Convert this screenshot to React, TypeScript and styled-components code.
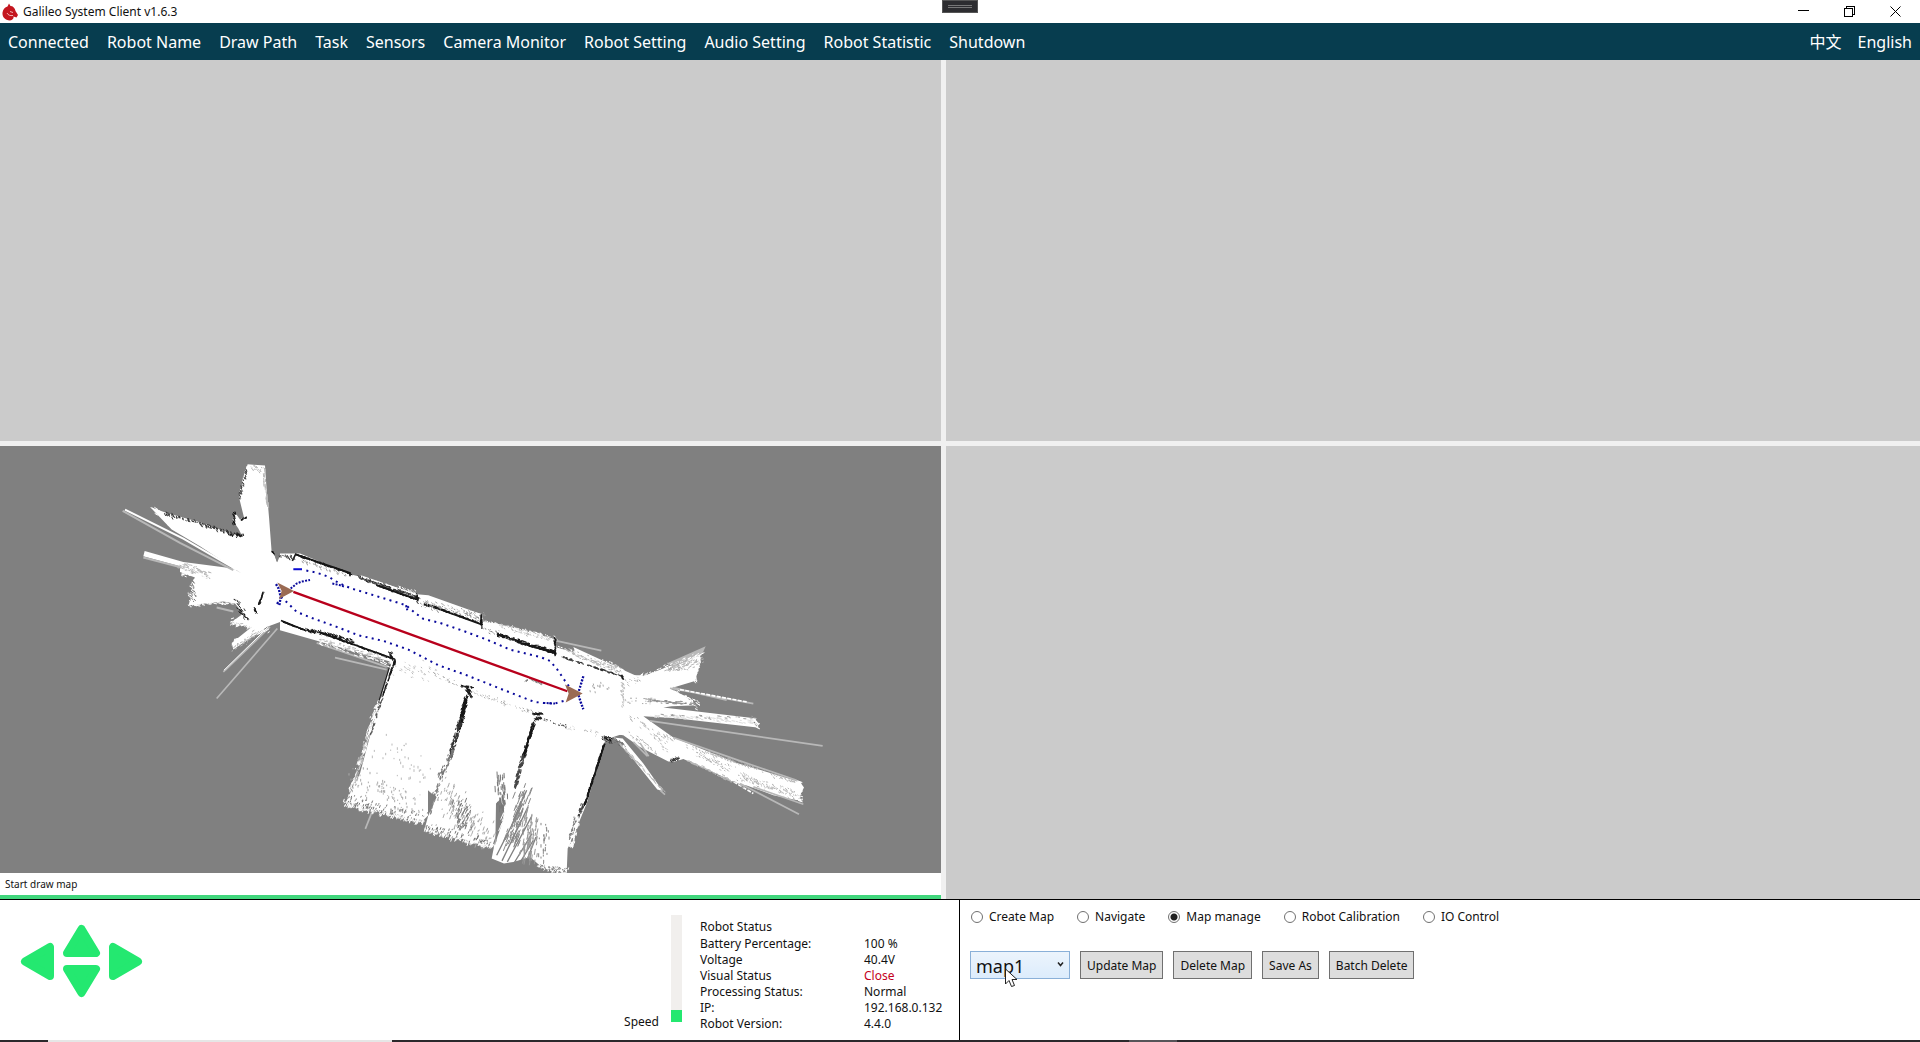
import React, { useState } from "react";
import styled, { createGlobalStyle, css } from "styled-components";

const GlobalStyle = createGlobalStyle`
  *, *::before, *::after { box-sizing: border-box; }
  body {
    margin: 0;
    background: #fff;
    color: #111;
    font: 12px/16px "Noto Sans", "Open Sans", "Noto Sans CJK SC", sans-serif;
  }
  button, select, input { font: inherit; color: inherit; margin: 0; }
`;

const green = "#24e870";

const Window = styled.div`
  display: flex;
  flex-direction: column;
  min-height: 100vh;
`;

const TitleBar = styled.header`
  position: relative;
  display: flex;
  align-items: center;
  height: 23px;
  padding: 0 15px 0 2px;
  gap: 5px;
`;

const Title = styled.h1`
  flex: 1;
  margin: 0;
  font-size: 12px;
  font-weight: 400;
`;

const Grip = styled.div`
  position: absolute;
  top: 0;
  left: 50%;
  width: 36px;
  height: 13px;
  margin-left: -18px;
  padding: 4px 5px;
  background: #2d2d30;
  border: 1px solid #555;

  &::before {
    content: "";
    display: block;
    height: 3px;
    border: solid #777;
    border-width: 1px 0;
  }
`;

const WindowButtons = styled.div`
  display: flex;
  gap: 26px;
`;

const WindowButton = styled.button`
  display: flex;
  width: 20px;
  height: 20px;
  padding: 0;
  align-items: center;
  justify-content: center;
  border: 0;
  background: none;
`;

const MenuBar = styled.nav`
  display: flex;
  justify-content: space-between;
  height: 37px;
  background: #073d4f;
`;

const MenuGroup = styled.div<{ $gap?: number }>`
  display: flex;
  gap: ${(p) => p.$gap ?? 0}px;
`;

const MenuItem = styled.button`
  padding: 0 8px;
  border: 0;
  background: none;
  color: #fff;
  font-size: 16px;
  white-space: nowrap;
`;

const Views = styled.main`
  flex: 1;
  display: grid;
  grid-template: 381fr 454fr / 941fr 974fr;
  gap: 5px;
  background: #f0f0f0;
`;

const View = styled.section`
  background: #cbcbcb;
`;

const MapView = styled.section`
  display: flex;
  flex-direction: column;
  min-width: 0;
  background: #fff;
`;

const MapCanvas = styled.svg`
  display: block;
  flex: 1 1 0;
  min-height: 0;
  width: 100%;
  background: #808080;
`;

const MapMessage = styled.p`
  margin: 0;
  padding: 3px 5px;
  font-size: 10px;
  border-bottom: 4px solid #40d67c;
`;

const Panels = styled.footer`
  display: grid;
  grid-template-columns: 1fr 1fr;
  min-height: 141px;
  border-top: 1px solid #000;
`;

const DrivePanel = styled.section`
  display: flex;
  padding: 15px 0 8px 20px;
  border-right: 1px solid #000;
`;

const Pad = styled.div`
  display: grid;
  grid-template: 33px 33px / 34px 39px 34px;
  align-self: flex-start;
  align-items: center;
  gap: 8px;
  margin: 9px auto 0 0;
`;

type Direction = "up" | "down" | "left" | "right";

const padPlace = {
  up: css`grid-area: 1 / 2;`,
  down: css`grid-area: 2 / 2;`,
  left: css`grid-area: 1 / 1 / 3 / 2;`,
  right: css`grid-area: 1 / 3 / 3 / 4;`,
};

const PadButton = styled.button<{ $dir: Direction }>`
  padding: 0;
  border: 0;
  background: none;
  ${(p) => padPlace[p.$dir]}

  svg {
    display: block;
    fill: ${green};
    stroke: ${green};
    stroke-width: 8px;
    stroke-linejoin: round;
  }
`;

const SpeedLabel = styled.label`
  align-self: flex-end;
  margin-right: 12px;
  margin-bottom: 2px;
`;

const SpeedSlider = styled.input`
  appearance: none;
  writing-mode: vertical-lr;
  direction: rtl;
  width: 11px;
  height: 107px;
  margin-right: 18px;
  background: #f1efed;

  &::-webkit-slider-thumb {
    appearance: none;
    width: 11px;
    height: 12px;
    background: ${green};
  }
`;

const StatusTable = styled.table`
  width: 259px;
  align-self: flex-start;
  margin-top: 4px;
  border-collapse: collapse;
  table-layout: fixed;

  caption {
    height: 17px;
    text-align: left;
  }

  th {
    width: 164px;
    padding: 0;
    font-weight: 400;
    text-align: left;
  }

  td {
    padding: 0;
    white-space: nowrap;
  }
`;

const StatusValue = styled.td<{ $alert?: boolean }>`
  color: ${(p) => (p.$alert ? "#c4001c" : "inherit")};
`;

const TaskPanel = styled.section`
  padding: 9px 10px;
`;

const ModeList = styled.div`
  display: flex;
  gap: 23px;
  padding-left: 1px;
`;

const ModeOption = styled.label`
  display: flex;
  align-items: center;
  gap: 6px;
  white-space: nowrap;
`;

const Radio = styled.input`
  appearance: none;
  width: 12px;
  height: 12px;
  border: 1px solid #707070;
  border-radius: 50%;
  background: #fff;

  &:checked {
    background: radial-gradient(circle, #212121 3px, #fff 4px);
  }
`;

const Actions = styled.div`
  display: flex;
  gap: 10px;
  margin-top: 26px;
`;

const Picker = styled.div`
  position: relative;
  width: 100px;
`;

const MapSelect = styled.select`
  appearance: none;
  display: block;
  width: 100%;
  height: 28px;
  padding: 1px 5px 0;
  border: 1px solid #8ab0d8;
  border-radius: 0;
  background: linear-gradient(#ecf4fc, #dcecfc);
  font-size: 18px;
  line-height: 24px;
`;

const Caret = styled.svg`
  position: absolute;
  top: 11px;
  right: 6px;
  pointer-events: none;
`;

const Pointer = styled.svg`
  position: absolute;
  top: 17px;
  left: 35px;
  pointer-events: none;
`;

const ActionButton = styled.button`
  height: 28px;
  padding: 1px 6px 0;
  border: 1px solid #707070;
  background: #ddd;
  white-space: nowrap;
`;

const Taskbar = styled.div`
  display: flex;
  height: 2px;
  background: #2b292c;
`;

const TaskbarSlot = styled.div<{ $start: number; $width: number; $color: string }>`
  width: ${(p) => p.$width}px;
  margin-left: ${(p) => p.$start}px;
  background: ${(p) => p.$color};
`;

/* ---------- occupancy map ---------- */

function random(seed: number) {
  let s = seed;
  return () => {
    s = (s * 16807) % 2147483647;
    return s / 2147483647;
  };
}

/* Short dashes scattered within `spread` of the segment (x1,y1)-(x2,y2). */
function scatter(
  seed: number,
  [x1, y1, x2, y2]: number[],
  spread: number,
  count: number,
  dx: number,
  dy: number
) {
  const r = random(seed * 7919 + 13);
  let d = "";
  for (let i = 0; i < count; i++) {
    const t = r();
    const nx = (r() + r() - 1) * spread;
    const ny = (r() + r() - 1) * spread;
    const k = 0.4 + r();
    const x = Math.round(x1 + (x2 - x1) * t + nx);
    const y = Math.round(y1 + (y2 - y1) * t + ny);
    d += `M${x} ${y}l${Math.round(dx * k)} ${Math.round(dy * k)}`;
  }
  return d;
}

type Cloud = [number[], number, number, number, number, string];

function Clouds({ items, seed }: { items: Cloud[]; seed: number }) {
  return (
    <g fill="none" strokeWidth="3">
      {items.map(([seg, spread, count, dx, dy, color], i) => (
        <path key={i} d={scatter(seed + i, seg, spread, count, dx, dy)} stroke={color} />
      ))}
    </g>
  );
}

const W = "#fff";
const G = "#808080";
const L = "#b8b8b8";
const K = "#161616";

const westClouds: Cloud[] = [
  [[443, 75, 420, 175], 7, 60, 3, 6, W],
  [[440, 85, 418, 170], 5, 40, 2, 5, "#444"],
  [[450, 80, 490, 85], 10, 25, 3, 4, L],
  [[490, 85, 504, 200], 5, 30, 1, 12, L],
  [[160, 205, 240, 270], 9, 45, 8, 5, W],
  [[195, 218, 390, 275], 6, 90, 3, 6, "#333"],
  [[402, 210, 400, 250], 5, 22, 3, 8, K],
  [[422, 240, 438, 232], 3, 12, 6, -3, K],
  [[390, 280, 425, 284], 7, 26, 2, 6, K],
  [[240, 375, 330, 405], 14, 70, 6, 2, L],
  [[240, 400, 340, 412], 8, 40, 8, 2, W],
  [[285, 415, 268, 492], 14, 90, 5, 4, W],
  [[275, 420, 280, 480], 12, 30, 4, 5, G],
  [[270, 492, 400, 486], 7, 50, 8, 2, W],
  [[405, 475, 440, 540], 12, 34, 5, 6, K],
  [[490, 455, 478, 490], 3, 24, -3, 8, K],
  [[463, 500, 466, 518], 3, 18, 3, 4, K],
  [[395, 545, 450, 560], 12, 60, 8, -3, W],
  [[400, 610, 500, 560], 15, 90, 8, -5, W],
  [[400, 625, 470, 575], 12, 40, 5, -3, L],
  [[545, 345, 580, 352], 9, 20, 3, 6, "#444"],
  [[515, 334, 520, 338], 3, 14, 4, 2, K],
  [[585, 342, 750, 400], 3, 150, 5, 2, K],
  [[600, 360, 740, 405], 7, 40, 4, 3, "#999"],
  [[765, 410, 950, 455], 6, 60, 4, 3, W],
  [[775, 410, 950, 472], 7, 180, 5, 3, "#333"],
  [[830, 435, 950, 478], 3, 90, 6, 2, K],
  [[950, 460, 952, 485], 4, 20, 2, 5, K],
  [[968, 490, 1145, 530], 16, 130, 4, 3, "#999"],
  [[970, 490, 1010, 500], 5, 30, 4, 2, K],
  [[1000, 500, 1145, 550], 3, 90, 5, 2, K],
  [[1145, 520, 1143, 560], 3, 24, 0, 6, K],
  [[1148, 543, 1330, 585], 7, 90, 4, 3, W],
  [[1150, 565, 1200, 580], 8, 18, 4, 2, "#888"],
  [[545, 543, 615, 570], 2, 60, 5, 2, K],
  [[620, 568, 650, 572], 6, 34, 3, 6, K],
  [[655, 575, 760, 602], 8, 90, 5, 3, K],
  [[655, 575, 875, 655], 3, 110, 6, 2, K],
  [[655, 600, 870, 670], 13, 90, 8, 3, W],
  [[660, 600, 850, 655], 8, 70, 5, 1, L],
  [[870, 635, 875, 655], 6, 24, 3, 5, K],
  [[885, 660, 850, 760], 3, 60, -2, 8, K],
  [[850, 760, 808, 890], 5, 60, -2, 8, "#555"],
];

const southClouds: Cloud[] = [
  [[240, 470, 150, 760], 9, 150, -3, 9, W],
  [[205, 580, 160, 740], 8, 40, -2, 7, L],
  [[138, 785, 370, 838], 13, 280, -3, 8, W],
  [[140, 775, 370, 828], 20, 70, -2, 6, "#777"],
  [[180, 700, 350, 800], 55, 90, 0, 6, "#aaa"],
  [[250, 600, 370, 720], 60, 36, 0, 6, "#bbb"],
  [[285, 380, 400, 400], 35, 40, 3, 4, "#bbb"],
  [[400, 400, 480, 435], 10, 22, 3, 3, "#999"],
  [[482, 438, 518, 442], 3, 36, 4, 0, K],
  [[500, 445, 512, 465], 7, 44, 3, 5, K],
  [[500, 470, 480, 560], 8, 190, -2, 6, K],
  [[482, 540, 450, 650], 8, 130, -2, 6, "#333"],
  [[458, 630, 420, 710], 9, 65, -2, 7, "#777"],
  [[415, 730, 385, 820], 10, 45, -3, 9, G],
  [[425, 740, 560, 900], 55, 150, -3, 9, "#aaa"],
  [[480, 780, 500, 860], 30, 50, -4, 10, "#777"],
  [[378, 862, 578, 915], 11, 230, -3, 8, W],
  [[380, 855, 575, 905], 12, 50, -2, 6, "#777"],
  [[520, 455, 690, 515], 10, 55, 3, 2, "#aaa"],
  [[698, 520, 725, 520], 4, 50, 4, 2, K],
  [[703, 535, 725, 530], 5, 32, 3, 4, K],
  [[730, 538, 800, 560], 5, 24, 3, 1, "#444"],
  [[800, 560, 900, 580], 10, 22, 3, 1, "#bbb"],
  [[703, 545, 670, 650], 5, 180, -2, 7, K],
  [[672, 640, 645, 740], 7, 90, -2, 8, "#444"],
  [[600, 700, 610, 820], 20, 50, 1, 16, "#777"],
  [[640, 750, 620, 840], 20, 34, -8, 18, W],
  [[680, 740, 640, 900], 32, 90, -7, 18, "#888"],
  [[690, 800, 690, 950], 35, 70, -3, 18, "#999"],
  [[735, 850, 725, 980], 16, 30, 0, 10, "#888"],
  [[720, 975, 800, 990], 12, 110, -2, 6, W],
  [[720, 978, 798, 988], 10, 34, 3, 5, "#777"],
  [[913, 610, 855, 790], 3, 160, -2, 7, K],
  [[850, 790, 825, 860], 6, 50, -2, 7, "#444"],
  [[835, 830, 812, 920], 9, 90, -2, 8, W],
  [[830, 830, 810, 900], 8, 22, -2, 8, G],
  [[910, 590, 930, 600], 8, 40, 3, 4, K],
  [[590, 282, 762, 335], 6, 200, 6, 2, K],
  [[650, 305, 765, 338], 3, 110, 6, 2, K],
  [[600, 255, 765, 300], 9, 80, 3, 4, L],
  [[555, 245, 765, 292], 6, 80, 3, 4, W],
  [[765, 292, 766, 345], 3, 40, 0, 5, K],
  [[785, 350, 965, 408], 3, 80, 6, 2, "#333"],
  [[775, 320, 960, 382], 8, 80, 5, 2, W],
  [[790, 330, 960, 385], 9, 60, 5, 2, L],
  [[965, 405, 968, 415], 3, 16, 2, 3, K],
  [[675, 425, 690, 415], 3, 14, 3, -2, "#777"],
  [[690, 415, 722, 430], 4, 24, 4, 2, "#888"],
  [[880, 440, 960, 440], 22, 16, 1, 5, "#aaa"],
  [[965, 430, 970, 490], 8, 30, 2, 5, "#bbb"],
];

const eastClouds: Cloud[] = [
  [[300, 235, 480, 165], 14, 80, 8, -4, W],
  [[380, 210, 480, 180], 15, 60, 8, -3, L],
  [[478, 170, 462, 240], 7, 50, 3, 5, W],
  [[380, 200, 440, 200], 18, 30, 2, 3, "#999"],
  [[400, 275, 470, 315], 12, 80, 6, 3, W],
  [[320, 300, 460, 312], 6, 34, 8, 1, "#888"],
  [[260, 300, 340, 300], 12, 20, 6, 0, "#aaa"],
  [[330, 345, 650, 365], 8, 70, 9, 2, "#ddd"],
  [[340, 345, 640, 352], 7, 26, 7, 1, "#999"],
  [[640, 355, 650, 380], 6, 24, 6, 2, W],
  [[270, 350, 400, 420], 12, 40, 5, 4, L],
  [[440, 435, 770, 545], 7, 110, 3, 5, L],
  [[470, 460, 580, 510], 14, 60, 3, 3, "#aaa"],
  [[590, 525, 770, 585], 15, 140, 4, 3, L],
  [[770, 545, 775, 600], 12, 60, 9, 3, W],
  [[440, 480, 610, 560], 5, 60, 7, 3, L],
  [[260, 390, 350, 460], 10, 24, 6, 4, L],
  [[340, 400, 380, 450], 14, 24, 3, 4, "#bbb"],
  [[390, 480, 415, 474], 6, 34, 4, 2, "#333"],
  [[225, 415, 250, 435], 9, 30, 4, 4, "#666"],
  [[240, 430, 370, 570], 4, 50, 6, 8, L],
  [[100, 160, 240, 215], 8, 50, 6, 2, L],
  [[245, 210, 262, 225], 7, 30, 4, 4, W],
  [[240, 250, 300, 235], 16, 24, 3, 3, "#aaa"],
];

function OccupancyMap() {
  return (
    <MapCanvas
      viewBox="0 446 941 427"
      preserveAspectRatio="xMidYMid meet"
      role="img"
      aria-label="Robot map"
    >
      <g transform="translate(540 600) scale(.33333)" stroke="none">
        <g fill={W}>
          <path d="M100 140L240 205 300 232 480 162 482 185 465 242 390 265 430 285 470 315 395 318 370 322 650 355 640 366 652 382 400 353 310 348 400 412 590 488 780 545 792 562 772 600 700 585 620 556 600 552 430 476 405 484 385 484 300 440 250 405 205 400Z" />
          <path d="M220 412L248 415 310 490 368 572 352 568 270 465Z" />
        </g>
        <path d="M380 190L497 138 485 165 400 198Z" fill={L} />
        <g fill="none" stroke={L} strokeWidth="5">
          <path d="M330 362L848 437M600 550L777 642M640 560L790 612M50 122L184 151M400 412L600 482 770 540" />
          <path d="M390 264L640 310M400 262L560 300M280 425L322 468M300 428L326 468M360 570L375 583M400 200L485 160" />
          <path d="M420 268L620 305M700 575L780 590M540 520L640 580" stroke={W} strokeDasharray="12 4" />
        </g>
        <path d="M320 297L430 308 430 313 350 303Z" fill="#999" />
      </g>
      <g transform="translate(300 540) scale(.33333)">
        <path
          fill={W}
          d="M0 40L150 102 175 108 350 160 358 176 385 178 548 222 550 245 590 250 765 296 770 322 880 352 965 385 985 405 1030 405 1030 560 940 590 915 602 860 790 815 900 803 925 800 998 730 985 690 950 640 965 612 970 575 955 590 880 575 922 375 862 385 825 370 840 138 785 180 700 220 550 275 365 -60 270 -60 40Z"
        />
        <path fill={G} d="M588 790L603 775 612 835 592 890 586 915ZM384 750L395 760 410 770 384 828Z" />
        <g fill="none" stroke={G} strokeWidth="4">
          <path d="M590 945L668 790M606 962L684 800M622 965L694 830M640 972L696 880M656 974L700 900M676 972L708 890M640 840L680 750" />
        </g>
        <path d="M222 800L196 866" fill="none" stroke={L} strokeWidth="5" />
        <g fill="none" stroke={K} strokeWidth="5">
          <path d="M655 308L765 338M914 610L862 770" />
          <path d="M498 475L485 530" strokeWidth="8" />
          <path d="M270 375L222 530" strokeWidth="3" />
        </g>
      </g>
      <g transform="translate(100 440) scale(.33333)">
        <path
          fill={W}
          d="M443 72L495 76 500 150 507 230 515 335 525 348 530 365 538 347 578 358 585 342 750 400 760 415 785 406 950 462 985 465 1145 522 1150 545 1320 586 1320 900 1000 700 885 655 650 580 540 545 500 560 400 628 395 608 455 560 395 545 430 520 405 490 370 484 265 495 285 450 268 438 285 412 240 395 240 378 130 348 134 332 250 365 400 385 425 400 300 318 215 268 150 200 200 218 300 246 390 278 428 290 415 265 398 240 402 212 420 238 432 232 418 175 430 110Z"
        />
        <g fill="none" strokeWidth="6">
          <path d="M75 208L250 295 410 388" stroke={W} />
          <path d="M68 212L240 308 400 390M130 352L245 382M350 502L400 514M390 546L430 552" stroke={L} />
          <path d="M370 695L510 560M350 775L532 565M376 690L500 570M705 652L860 688M650 608L860 680" stroke={L} strokeWidth="5" />
          <path d="M372 690L505 560" stroke={W} strokeWidth="3" />
        </g>
        <path fill={G} d="M521 340L540 345 532 366Z" />
        <g fill="none" stroke={K} strokeWidth="5">
          <path d="M577 362L587 342 750 398 750 408M543 541L615 570M655 575L885 657M885 657L884 675M1000 500L1143 552 1145 522M830 435L950 478" />
        </g>
        <Clouds items={westClouds} seed={11} />
      </g>
      <g transform="translate(540 600) scale(.33333)">
        <Clouds items={eastClouds} seed={71} />
      </g>
      <g transform="translate(300 540) scale(.33333)">
        <Clouds items={southClouds} seed={131} />
      </g>
      <g transform="translate(100 440) scale(.33333)" fill="none">
        <g stroke="#0a0a9c" strokeWidth="6" strokeDasharray="6 13">
          <path d="M619 391L640 395 665 402 690 412 705 422 735 437 755 445 795 457 870 480 918 495 945 518 970 536 1020 548 1090 572 1160 598 1230 628 1320 650 1350 662 1372 688 1395 722 1412 745" />
          <path d="M543 470L565 490 590 515 635 533 710 560 775 585 850 602 925 628 1015 675 1100 705 1200 745 1303 785 1330 788 1365 790 1405 778" />
        </g>
        <g stroke="#0a0a9c" strokeWidth="6" strokeDasharray="6 4">
          <path d="M572 445L590 430 605 424 630 419M697 430L717 434 735 440M918 495L922 510M1330 788L1365 790" />
          <path d="M528 432L536 445 542 470 538 496M530 487L540 492" strokeWidth="7" />
          <path d="M1450 708L1442 735 1434 760 1442 785 1450 807" strokeWidth="7" />
        </g>
        <path d="M580 387H606" stroke="#0a0ad0" strokeWidth="6" />
        <path d="M580 455L1402 753" stroke="#b8001c" strokeWidth="7" />
        <g fill="#9a6a52">
          <path d="M532 427L582 452 537 476 545 452Z" />
          <path d="M1395 733L1448 760 1397 787 1406 760Z" />
        </g>
      </g>
    </MapCanvas>
  );
}

/* ---------- controls ---------- */

const padShapes: Record<Direction, [number, number, string]> = {
  up: [39, 33, "M19.5 5L34 29H5Z"],
  down: [39, 33, "M19.5 28L34 4H5Z"],
  left: [34, 39, "M5 19.5L30 5V34Z"],
  right: [34, 39, "M29 19.5L4 5V34Z"],
};

const menus = [
  "Connected",
  "Robot Name",
  "Draw Path",
  "Task",
  "Sensors",
  "Camera Monitor",
  "Robot Setting",
  "Audio Setting",
  "Robot Statistic",
  "Shutdown",
];

const statusRows: { name: string; value: string; alert?: boolean }[] = [
  { name: "Battery Percentage:", value: "100 %" },
  { name: "Voltage", value: "40.4V" },
  { name: "Visual Status", value: "Close", alert: true },
  { name: "Processing Status:", value: "Normal" },
  { name: "IP:", value: "192.168.0.132" },
  { name: "Robot Version:", value: "4.4.0" },
];

const modes = ["Create Map", "Navigate", "Map manage", "Robot Calibration", "IO Control"];
const actions = ["Update Map", "Delete Map", "Save As", "Batch Delete"];

function Logo() {
  return (
    <svg width="16" height="18" viewBox="0 0 16 18" aria-hidden="true">
      <path
        d="M7 0.500L8.500 3C11 3 13 5 13.500 8L16 12 14.500 14.500 11.500 13.500C12 15.500 10.500 17 8 17.500 3 17 0 14 0.500 9.500 1 6 3 4 5.500 3.500Z"
        fill="#c4161f"
      />
      <path d="M8 8.500L11 9.500M11 12.500C8 13 6 12 5 10" stroke="#f3b4b4" strokeWidth="1" fill="none" />
    </svg>
  );
}

export default function App() {
  const [mode, setMode] = useState("Map manage");
  const [speed, setSpeed] = useState(0);

  return (
    <>
      <GlobalStyle />
      <Window>
        <TitleBar>
          <Logo />
          <Title>Galileo System Client v1.6.3</Title>
          <Grip />
          <WindowButtons>
            <WindowButton aria-label="Minimize">
              <svg width="11" height="11" shapeRendering="crispEdges">
                <path d="M0 4.500H11" stroke="#000" />
              </svg>
            </WindowButton>
            <WindowButton aria-label="Restore">
              <svg width="11" height="11" fill="none" stroke="#000" shapeRendering="crispEdges">
                <path d="M.5 2.500H8.500V10.500H.5ZM2.500 2.500V.5H10.500V8.500H8.500" />
              </svg>
            </WindowButton>
            <WindowButton aria-label="Close">
              <svg width="11" height="11" stroke="#000">
                <path d="M.5 .5L10.500 10.500M10.500 .5L.5 10.500" />
              </svg>
            </WindowButton>
          </WindowButtons>
        </TitleBar>

        <MenuBar>
          <MenuGroup $gap={2}>
            {menus.map((m) => (
              <MenuItem key={m}>{m}</MenuItem>
            ))}
          </MenuGroup>
          <MenuGroup>
            <MenuItem lang="zh">中文</MenuItem>
            <MenuItem>English</MenuItem>
          </MenuGroup>
        </MenuBar>

        <Views>
          <View />
          <View />
          <MapView>
            <OccupancyMap />
            <MapMessage>Start draw map</MapMessage>
          </MapView>
          <View />
        </Views>

        <Panels>
          <DrivePanel>
            <Pad>
              {(Object.keys(padShapes) as Direction[]).map((dir) => {
                const [w, h, d] = padShapes[dir];
                return (
                  <PadButton key={dir} $dir={dir} aria-label={`Move ${dir}`}>
                    <svg width={w} height={h}>
                      <path d={d} />
                    </svg>
                  </PadButton>
                );
              })}
            </Pad>
            <SpeedLabel htmlFor="speed">Speed</SpeedLabel>
            <SpeedSlider
              id="speed"
              type="range"
              min={0}
              max={100}
              value={speed}
              onChange={(e) => setSpeed(Number(e.target.value))}
            />
            <StatusTable>
              <caption>Robot Status</caption>
              <tbody>
                {statusRows.map((row) => (
                  <tr key={row.name}>
                    <th scope="row">{row.name}</th>
                    <StatusValue $alert={row.alert}>{row.value}</StatusValue>
                  </tr>
                ))}
              </tbody>
            </StatusTable>
          </DrivePanel>

          <TaskPanel>
            <ModeList role="radiogroup" aria-label="Mode">
              {modes.map((m) => (
                <ModeOption key={m}>
                  <Radio type="radio" name="mode" checked={mode === m} onChange={() => setMode(m)} />
                  {m}
                </ModeOption>
              ))}
            </ModeList>
            <Actions>
              <Picker>
                <MapSelect aria-label="Map" defaultValue="map1">
                  <option>map1</option>
                </MapSelect>
                <Caret width="7" height="5" fill="none" stroke="#222" strokeWidth="1.500">
                  <path d="M1 .5L3.500 3.500 6 .5" />
                </Caret>
                <Pointer width="13" height="20" viewBox="0 0 13 20">
                  <path
                    d="M.5 1V16L4 12.500 6.500 18.500 9.500 17.500 7 11.500H12Z"
                    fill="#fff"
                    stroke="#222"
                  />
                </Pointer>
              </Picker>
              {actions.map((a) => (
                <ActionButton key={a}>{a}</ActionButton>
              ))}
            </Actions>
          </TaskPanel>
        </Panels>

        <Taskbar>
          <TaskbarSlot $start={48} $width={344} $color="#e6e6e6" />
          <TaskbarSlot $start={737} $width={48} $color="#565458" />
        </Taskbar>
      </Window>
    </>
  );
}
